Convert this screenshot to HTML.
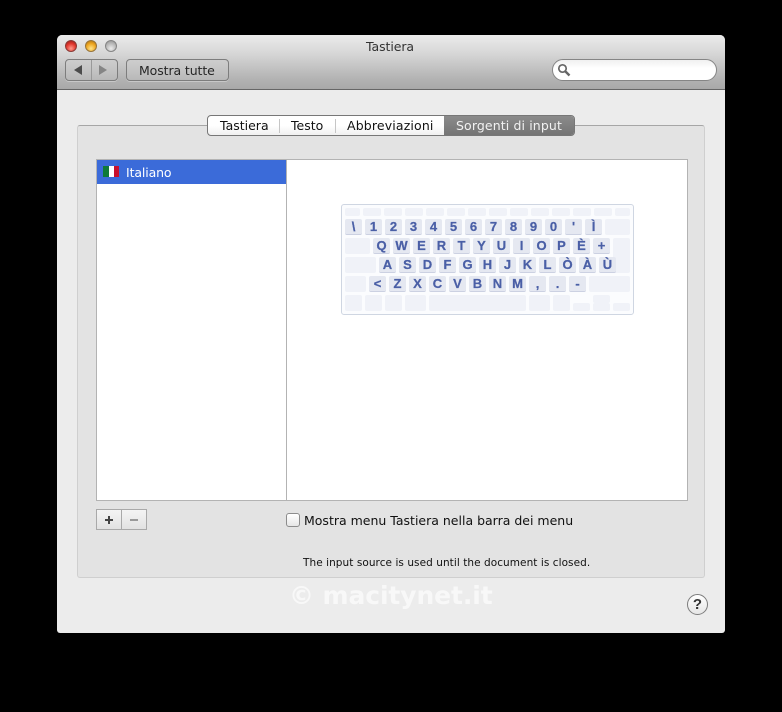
<!DOCTYPE html>
<html lang="it"><head><meta charset="utf-8"><title>Tastiera</title>
<style>
html,body{margin:0;padding:0;background:#000;width:782px;height:712px;overflow:hidden}
*{box-sizing:border-box}
body{position:relative;font-family:"DejaVu Sans","Liberation Sans",sans-serif;color:#111}
div,span,svg{position:absolute;white-space:nowrap}
#win{left:57px;top:35px;width:668px;height:598px;background:#ececec;border-radius:5px 5px 3px 3px;overflow:hidden}
#bar{left:0;top:0;width:668px;height:55px;background:linear-gradient(#ebebeb,#d6d6d6 35%,#b4b4b4 80%,#a8a8a8);border-bottom:1px solid #666}
.btn{height:22px;top:59px;border:1px solid #7d7d7d;border-radius:4px;background:linear-gradient(#cdcdcd,#c4c4c4 50%,#b8b8b8);box-shadow:0 1px 0 rgba(255,255,255,.3)}
.t{font-size:12.5px;line-height:16px}
.light{width:12px;height:12px;border-radius:50%;top:40px}
#group{left:77px;top:125px;width:628px;height:453px;background:#e3e3e3;border:1px solid #cfcfcf;border-top-color:#a6a6a6;border-radius:3px}
#tabs{left:207px;top:115px;width:368px;height:21px;border:1px solid #777;border-radius:4px;background:linear-gradient(#fff,#fff 50%,#f0f0f0);overflow:hidden}
#list{left:96px;top:159px;width:592px;height:342px;background:#fff;border:1px solid #b3b3b3}
#kb{left:341px;top:204px;width:293px;height:111px;background:#fbfcfe;border:1px solid #cfd6e2;border-radius:3px}
.kb i{position:absolute;display:block;background:#f0f2f8;border-radius:2px}
.kb b{position:absolute;display:block;width:17px;height:16px;background:#e5e8f1;border-bottom:1px solid #ccd1e2;border-radius:2px;color:#4a5fa6;font:bold 13px/16px "Liberation Sans",sans-serif;text-align:center;-webkit-text-stroke:.25px #4a5fa6}
</style></head><body>
<div id="win"><div id="bar"></div></div>

<div class="light" style="left:65px;background:radial-gradient(circle at 50% 75%,#ff9a8c,#e0352c 55%,#8f1d18);border:1px solid #8a3a36"></div>
<div class="light" style="left:85px;background:radial-gradient(circle at 50% 75%,#ffe48a,#eda51f 55%,#a56d10);border:1px solid #97743a"></div>
<div class="light" style="left:105px;background:radial-gradient(circle at 50% 75%,#ececec,#b5b5b5 60%,#8d8d8d);border:1px solid #858585"></div>
<div class="t" style="left:366px;top:39px;color:#333;letter-spacing:-.08px">Tastiera</div>

<div class="btn" style="left:65px;width:53px"></div>
<div style="left:91px;top:60px;width:1px;height:20px;background:#999"></div>
<svg style="left:72px;top:64px" width="40" height="12"><path d="M2 6 10 1V11Z" fill="#4c4c4c"/><path d="M27 1 35 6 27 11Z" fill="#858585"/></svg>
<div class="btn" style="left:126px;width:103px"></div>
<div class="t" style="left:139px;top:63px;color:#262626;letter-spacing:-.1px">Mostra tutte</div>

<div style="left:552px;top:59px;width:165px;height:22px;border-radius:11px;background:linear-gradient(#f0f0f0,#fff 40%);border:1px solid #858585"></div>
<svg style="left:556px;top:62px" width="16" height="16"><circle cx="6.500" cy="6.500" r="3.700" fill="none" stroke="#666" stroke-width="1.700"/><path d="M9.500 9.500 13.500 13.500" stroke="#666" stroke-width="2.400"/></svg>

<div id="group"></div>
<div id="tabs">
<div style="left:236px;top:0;width:131px;height:20px;background:linear-gradient(#8b8b8b,#737373)"></div>
<div style="left:71px;top:3px;width:1px;height:14px;background:#c6c6c6"></div>
<div style="left:127px;top:3px;width:1px;height:14px;background:#c6c6c6"></div>
</div>
<div class="t" style="left:220px;top:118px">Tastiera</div>
<div class="t" style="left:291px;top:118px">Testo</div>
<div class="t" style="left:347px;top:118px;letter-spacing:.15px">Abbreviazioni</div>
<div class="t" style="left:456px;top:118px;color:#f2f2f2;letter-spacing:.12px">Sorgenti di input</div>

<div id="list">
<div style="left:0;top:0;width:189px;height:24px;background:#3b6bd9"></div>
<div style="left:189px;top:0;width:1px;height:340px;background:#b3b3b3"></div>
</div>
<svg style="left:103px;top:166px" width="16" height="11"><rect width="16" height="11" fill="#fff"/><rect width="6" height="11" fill="#0f7a3a"/><rect x="11" width="5" height="11" fill="#c8102e"/></svg>
<div class="t" style="left:126px;top:165px;color:#fff;letter-spacing:-.12px">Italiano</div>

<div id="kb"></div>
<div class="kb" style="left:0;top:0">
<i style="left:345px;top:208px;width:15px;height:8px"></i><i style="left:363px;top:208px;width:18px;height:8px"></i><i style="left:384px;top:208px;width:18px;height:8px"></i><i style="left:405px;top:208px;width:18px;height:8px"></i><i style="left:426px;top:208px;width:18px;height:8px"></i><i style="left:447px;top:208px;width:18px;height:8px"></i><i style="left:468px;top:208px;width:18px;height:8px"></i><i style="left:489px;top:208px;width:18px;height:8px"></i><i style="left:510px;top:208px;width:18px;height:8px"></i><i style="left:531px;top:208px;width:18px;height:8px"></i><i style="left:552px;top:208px;width:18px;height:8px"></i><i style="left:573px;top:208px;width:18px;height:8px"></i><i style="left:594px;top:208px;width:18px;height:8px"></i><i style="left:615px;top:208px;width:15px;height:8px"></i>
<i style="left:605px;top:219px;width:25px;height:16px"></i>
<i style="left:345px;top:238px;width:25px;height:16px"></i>
<i style="left:613px;top:238px;width:17px;height:35px"></i>
<i style="left:345px;top:257px;width:31px;height:16px"></i>
<i style="left:345px;top:276px;width:21px;height:16px"></i>
<i style="left:589px;top:276px;width:41px;height:16px"></i>
<i style="left:345px;top:295px;width:17px;height:16px"></i><i style="left:365px;top:295px;width:17px;height:16px"></i><i style="left:385px;top:295px;width:17px;height:16px"></i><i style="left:405px;top:295px;width:21px;height:16px"></i><i style="left:429px;top:295px;width:97px;height:16px"></i><i style="left:529px;top:295px;width:21px;height:16px"></i><i style="left:553px;top:295px;width:17px;height:16px"></i><i style="left:573px;top:303px;width:17px;height:8px"></i><i style="left:593px;top:295px;width:17px;height:8px"></i><i style="left:593px;top:303px;width:17px;height:8px"></i><i style="left:613px;top:303px;width:17px;height:8px"></i>
<b style="left:345px;top:219px">\</b><b style="left:365px;top:219px">1</b><b style="left:385px;top:219px">2</b><b style="left:405px;top:219px">3</b><b style="left:425px;top:219px">4</b><b style="left:445px;top:219px">5</b><b style="left:465px;top:219px">6</b><b style="left:485px;top:219px">7</b><b style="left:505px;top:219px">8</b><b style="left:525px;top:219px">9</b><b style="left:545px;top:219px">0</b><b style="left:565px;top:219px">'</b><b style="left:585px;top:219px">Ì</b>
<b style="left:373px;top:238px">Q</b><b style="left:393px;top:238px">W</b><b style="left:413px;top:238px">E</b><b style="left:433px;top:238px">R</b><b style="left:453px;top:238px">T</b><b style="left:473px;top:238px">Y</b><b style="left:493px;top:238px">U</b><b style="left:513px;top:238px">I</b><b style="left:533px;top:238px">O</b><b style="left:553px;top:238px">P</b><b style="left:573px;top:238px">È</b><b style="left:593px;top:238px">+</b>
<b style="left:379px;top:257px">A</b><b style="left:399px;top:257px">S</b><b style="left:419px;top:257px">D</b><b style="left:439px;top:257px">F</b><b style="left:459px;top:257px">G</b><b style="left:479px;top:257px">H</b><b style="left:499px;top:257px">J</b><b style="left:519px;top:257px">K</b><b style="left:539px;top:257px">L</b><b style="left:559px;top:257px">Ò</b><b style="left:579px;top:257px">À</b><b style="left:599px;top:257px">Ù</b>
<b style="left:369px;top:276px">&lt;</b><b style="left:389px;top:276px">Z</b><b style="left:409px;top:276px">X</b><b style="left:429px;top:276px">C</b><b style="left:449px;top:276px">V</b><b style="left:469px;top:276px">B</b><b style="left:489px;top:276px">N</b><b style="left:509px;top:276px">M</b><b style="left:529px;top:276px">,</b><b style="left:549px;top:276px">.</b><b style="left:569px;top:276px">-</b>
</div>

<div style="left:96px;top:509px;width:51px;height:21px;border:1px solid #a9a9a9;background:linear-gradient(#f4f4f4,#e2e2e2)"></div>
<div style="left:121px;top:510px;width:1px;height:19px;background:#a9a9a9"></div>
<svg style="left:96px;top:509px" width="51" height="21"><path d="M9 11H17M13 7V15" stroke="#444" stroke-width="2"/><path d="M34 11H42" stroke="#999" stroke-width="2"/></svg>

<div style="left:286px;top:513px;width:14px;height:14px;border:1px solid #8c8c8c;border-radius:3px;background:linear-gradient(#fff,#e6e6e6)"></div>
<div class="t" style="left:304px;top:513px">Mostra menu Tastiera nella barra dei menu</div>
<div style="left:303px;top:555px;font-size:10.500px;line-height:16px;letter-spacing:.06px">The input source is used until the document is closed.</div>
<div style="left:289px;top:581px;font:bold 25px/30px 'DejaVu Sans',sans-serif;letter-spacing:-.1px;color:rgba(255,255,255,.62)">© macitynet.it</div>

<div style="left:687px;top:594px;width:21px;height:21px;border-radius:50%;border:1px solid #7c7c7c;background:linear-gradient(#fff,#e6e6e6);font:bold 15px/19px 'Liberation Sans',sans-serif;text-align:center;color:#333">?</div>
</body></html>
